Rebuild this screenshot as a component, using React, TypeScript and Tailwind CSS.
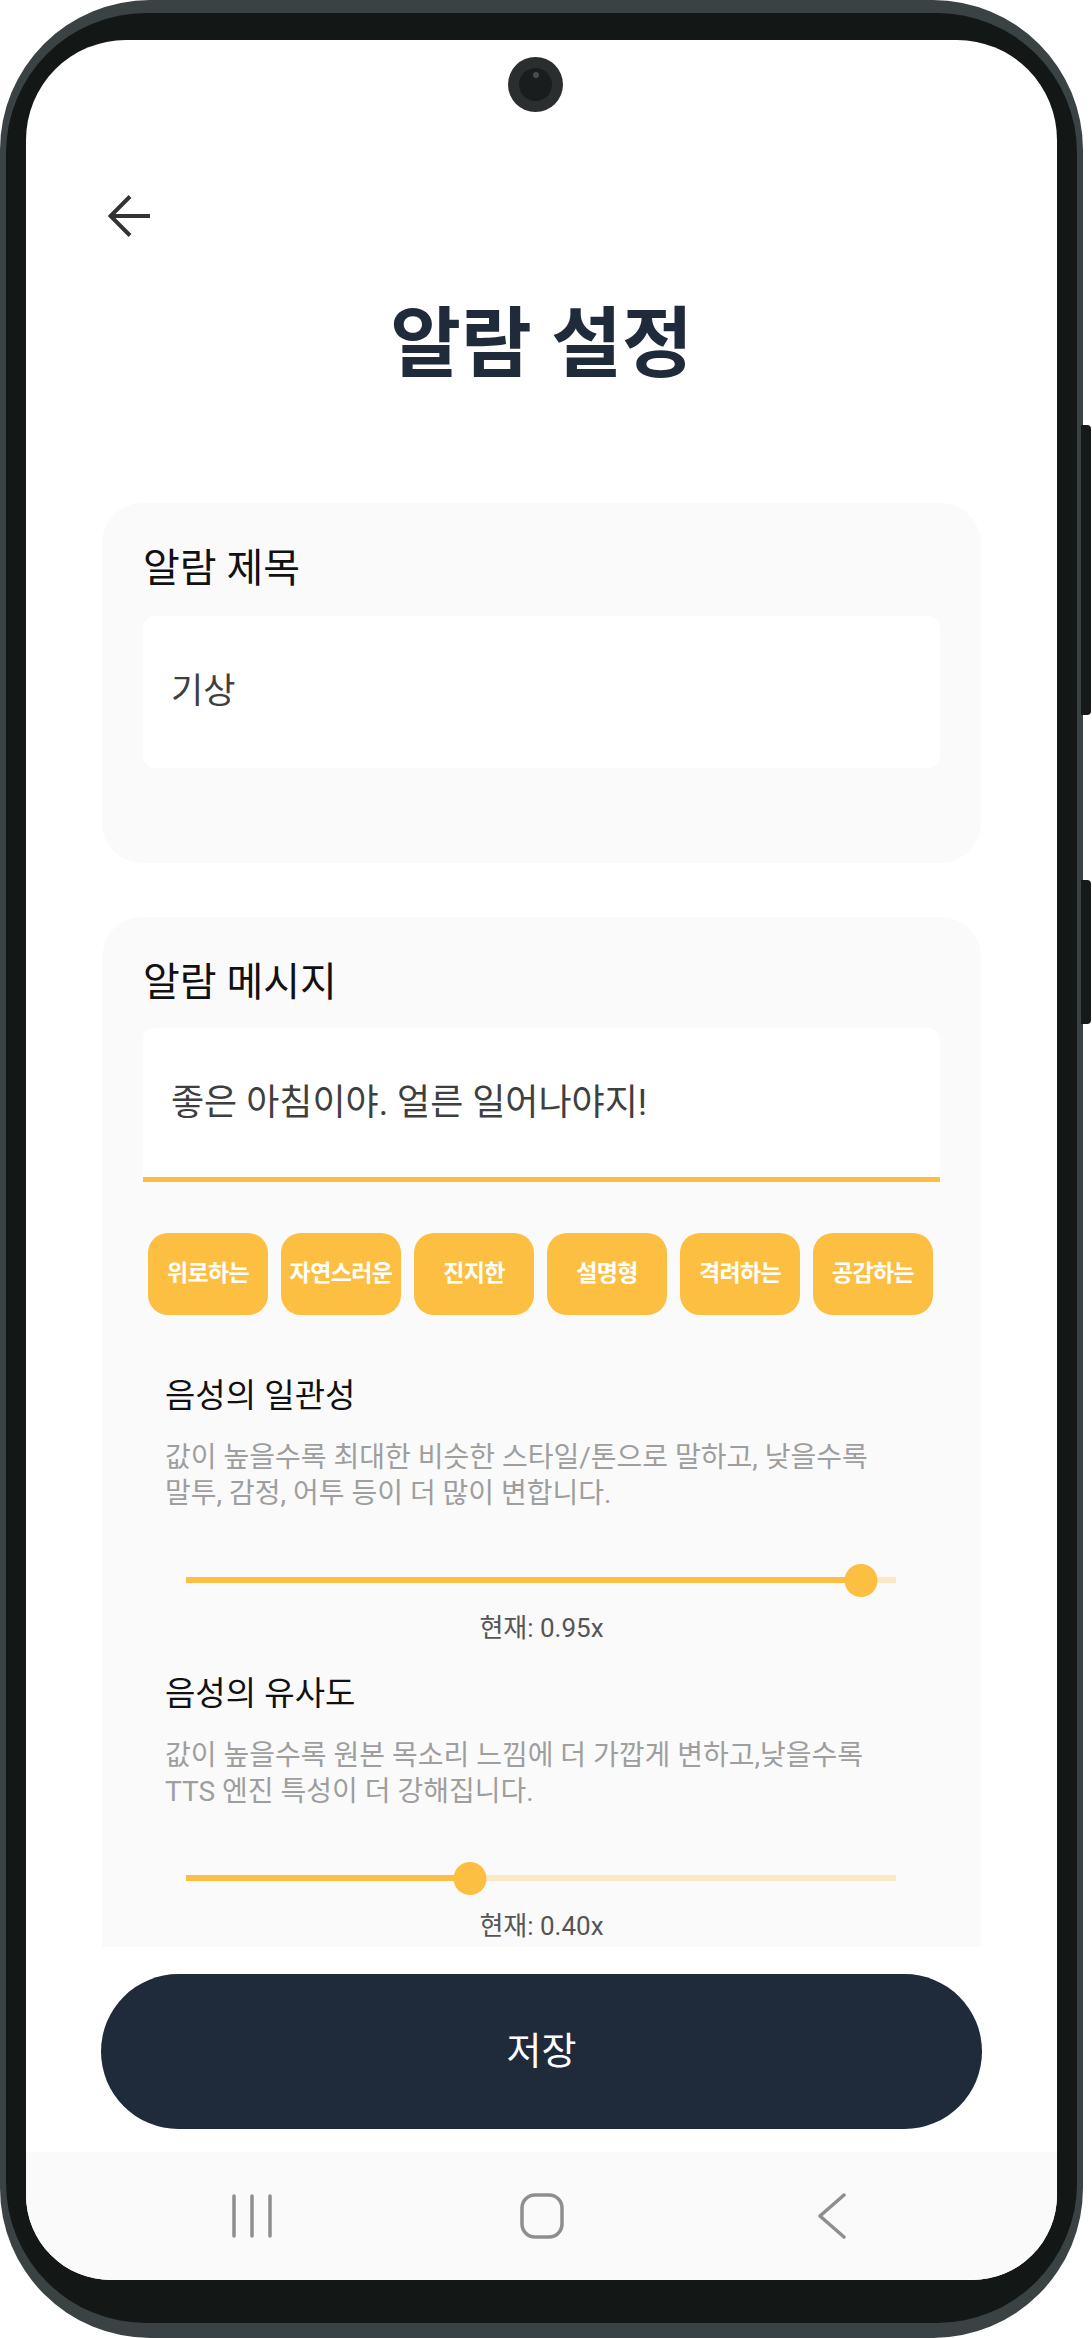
import React from "react";

const FONT = "font-['Roboto','Noto_Sans_CJK_KR',sans-serif]";

function Slider({ value }: { value: number }) {
  const pct = `${value * 100}%`;
  return (
    <div className="relative ml-[43px] h-[40px] w-[710px]">
      <div className="absolute left-0 right-0 top-[17px] h-[6px] bg-[#fde8c6]" />
      <div className="absolute left-0 top-[17px] h-[6px] bg-[#fcbf42]" style={{ width: pct }} />
      <div
        className="absolute top-[3.5px] h-[33px] w-[33px] -translate-x-1/2 rounded-full bg-[#fcbf42]"
        style={{ left: pct }}
      />
    </div>
  );
}

function VoiceSetting({
  title,
  lines,
  value,
  label,
  first,
}: {
  title: string;
  lines: [string, string];
  value: number;
  label: string;
  first?: boolean;
}) {
  return (
    <div className={first ? "mt-[60px]" : "mt-[29px]"}>
      <div className="pl-[22px] text-[33px] leading-[42px] text-[#111111]">{title}</div>
      <div className="mt-[23px] whitespace-nowrap pl-[22px] text-[28px] leading-[36px] text-[#9e9e9e]">
        {lines[0]}
        <br />
        {lines[1]}
      </div>
      <div className="mt-[48px]">
        <Slider value={value} />
      </div>
      <div className="mt-[12px] text-center text-[26px] leading-[32px] text-[#555555]">{label}</div>
    </div>
  );
}

const chips = ["위로하는", "자연스러운", "진지한", "설명형", "격려하는", "공감하는"];

export default function App() {
  return (
    <div className={`relative h-[2338px] w-[1092px] bg-white ${FONT}`}>
      {/* side buttons */}
      <div className="absolute left-[1081px] top-[425px] h-[290px] w-[10px] rounded-r-[4px] bg-[#151918]" />
      <div className="absolute left-[1081px] top-[880px] h-[144px] w-[10px] rounded-r-[4px] bg-[#151918]" />

      {/* phone body */}
      <div className="h-[2338px] w-[1083px] rounded-[150px] bg-[#3a4244] px-[6px] pb-[15px] pt-[13px]">
        <div className="h-full w-full rounded-[140px] bg-[#131716] px-[20px] pb-[43px] pt-[27px]">
          <div className="relative flex h-[2240px] w-[1031px] flex-col overflow-hidden rounded-b-[85px] rounded-t-[100px] bg-white">
            {/* camera */}
            <div className="absolute left-[482px] top-[17px] flex h-[55px] w-[55px] items-center justify-center rounded-full bg-[#2a2e2f]">
              <div className="relative h-[33px] w-[33px] rounded-full bg-[#1a1d1d]">
                <div className="absolute left-[13.5px] top-[4px] h-[6px] w-[6px] rounded-full bg-[#4a4d4e]" />
              </div>
            </div>

            {/* scroll region */}
            <div className="h-[1907px] shrink-0 overflow-hidden">
              <div className="pl-[82px] pt-[155px]">
                <svg width="42" height="42" viewBox="0 0 42 42" fill="none" stroke="#333333" strokeWidth="4">
                  <path d="M3 21 H42" />
                  <path d="M22 1.5 L2.5 21 L22 40.5" />
                </svg>
              </div>
              <div className="mt-[66px] text-center text-[77px] font-bold leading-[84px] text-[#1f2a3b]">
                알람 설정
              </div>

              {/* card 1 */}
              <div className="mx-[76px] mt-[116px] rounded-[40px] bg-[#fafafa] px-[41px] pb-[95px] pt-[42px]">
                <div className="text-[40px] leading-[48px] text-[#111111]">알람 제목</div>
                <div className="mt-[23px] flex h-[152px] items-center rounded-[12px] bg-white pl-[28px] text-[35px] text-[#3f3f3f]">
                  기상
                </div>
              </div>

              {/* card 2 */}
              <div className="mx-[76px] mt-[54px] rounded-[40px] bg-[#fafafa] px-[41px] pb-[60px] pt-[42px]">
                <div className="text-[40px] leading-[48px] text-[#111111]">알람 메시지</div>
                <div className="mt-[21px] flex h-[154px] items-center rounded-t-[12px] border-b-[5px] border-[#fcbf42] bg-white pl-[28px] text-[36px] text-[#3f3f3f]">
                  좋은 아침이야. 얼른 일어나야지!
                </div>
                <div className="mt-[51px] flex gap-[13px] px-[5px]">
                  {chips.map((c) => (
                    <div
                      key={c}
                      className="flex h-[82px] w-[120px] items-center justify-center whitespace-nowrap rounded-[20px] bg-[#fcbf42] text-[23px] font-bold tracking-[-0.6px] text-white"
                    >
                      {c}
                    </div>
                  ))}
                </div>
                <VoiceSetting
                  first
                  title="음성의 일관성"
                  lines={["값이 높을수록 최대한 비슷한 스타일/톤으로 말하고, 낮을수록", "말투, 감정, 어투 등이 더 많이 변합니다."]}
                  value={0.95}
                  label="현재: 0.95x"
                />
                <VoiceSetting
                  title="음성의 유사도"
                  lines={["값이 높을수록 원본 목소리 느낌에 더 가깝게 변하고,낮을수록", "TTS 엔진 특성이 더 강해집니다."]}
                  value={0.4}
                  label="현재: 0.40x"
                />
              </div>
            </div>

            {/* save button */}
            <div className="px-[75px] pb-[23px] pt-[27px]">
              <div className="flex h-[155px] items-center justify-center rounded-full bg-[#1f2a3b] text-[38px] text-white">
                저장
              </div>
            </div>

            {/* nav bar */}
            <div className="flex h-[128px] shrink-0 items-center justify-center gap-[230px] bg-[#fafafa]">
              <div className="flex w-[60px] justify-center">
                <svg width="40" height="44" viewBox="0 0 40 44" fill="none" stroke="#8e8e8e" strokeWidth="3.5" strokeLinecap="round">
                  <path d="M2 2 V42" />
                  <path d="M20 2 V42" />
                  <path d="M38 2 V42" />
                </svg>
              </div>
              <div className="flex w-[60px] justify-center">
                <svg width="44" height="46" viewBox="0 0 44 46" fill="none" stroke="#8e8e8e" strokeWidth="3.5">
                  <rect x="2" y="2" width="40" height="42" rx="13" />
                </svg>
              </div>
              <div className="flex w-[60px] justify-center">
                <svg width="30" height="46" viewBox="0 0 30 46" fill="none" stroke="#8e8e8e" strokeWidth="3.5" strokeLinecap="round" strokeLinejoin="round">
                  <path d="M27 2 L3 23 L27 44" />
                </svg>
              </div>
            </div>
          </div>
        </div>
      </div>
    </div>
  );
}
